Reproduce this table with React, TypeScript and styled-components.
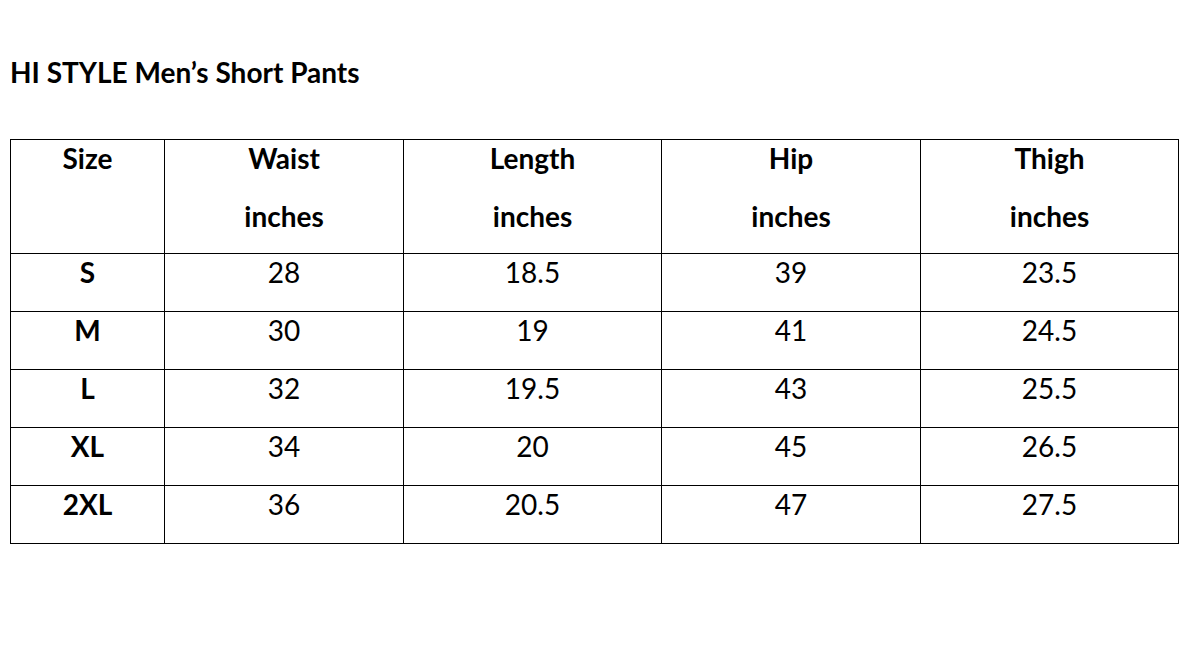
import React from "react";
import styled, { createGlobalStyle } from "styled-components";

const Global = createGlobalStyle`
  html, body { margin: 0; padding: 0; background: #ffffff; }
  body { font-family: Lato, "Open Sans", sans-serif; color: #000; }
`;

const Page = styled.div`
  width: 1184px;
  height: 650px;
  padding: 0 0 0 10px;
  box-sizing: border-box;
  overflow: hidden;
`;

const Title = styled.h1`
  margin: 0 0 48px 0;
  padding-top: 54px;
  font-size: 28px;
  font-weight: 700;
  line-height: 37px;
  letter-spacing: 0;
`;

const Table = styled.table`
  border-collapse: collapse;
  table-layout: fixed;
  width: 1168px;
`;

const Cell = styled.td<{ $bold?: boolean }>`
  border: 1px solid #000;
  padding: 0 0 21px 0;
  text-align: center;
  vertical-align: top;
  font-size: 28px;
  line-height: 36px;
  font-weight: ${(p) => (p.$bold ? 700 : 400)};
  height: 36px;
`;

const HeadCell = styled.th`
  border: 1px solid #000;
  padding: 0 0 19px 0;
  text-align: center;
  vertical-align: top;
  font-size: 28px;
  line-height: 36px;
  font-weight: 700;
`;

const HeadLine = styled.div<{ $second?: boolean }>`
  margin-top: ${(p) => (p.$second ? "22px" : "0")};
  height: 36px;
`;

const widths = [154, 239, 258, 259, 258];

const headers: [string, string][] = [
  ["Size", ""],
  ["Waist", "inches"],
  ["Length", "inches"],
  ["Hip", "inches"],
  ["Thigh", "inches"],
];

const rows = [
  ["S", "28", "18.5", "39", "23.5"],
  ["M", "30", "19", "41", "24.5"],
  ["L", "32", "19.5", "43", "25.5"],
  ["XL", "34", "20", "45", "26.5"],
  ["2XL", "36", "20.5", "47", "27.5"],
];

export default function App() {
  return (
    <>
      <Global />
      <Page>
        <Title>HI STYLE Men’s Short Pants</Title>
        <Table>
          <colgroup>
            {widths.map((w, i) => (
              <col key={i} style={{ width: w }} />
            ))}
          </colgroup>
          <thead>
            <tr>
              {headers.map(([a, b]) => (
                <HeadCell key={a}>
                  <HeadLine>{a}</HeadLine>
                  <HeadLine $second>{b}</HeadLine>
                </HeadCell>
              ))}
            </tr>
          </thead>
          <tbody>
            {rows.map((r) => (
              <tr key={r[0]}>
                {r.map((v, i) => (
                  <Cell key={i} $bold={i === 0}>
                    {v}
                  </Cell>
                ))}
              </tr>
            ))}
          </tbody>
        </Table>
      </Page>
    </>
  );
}
